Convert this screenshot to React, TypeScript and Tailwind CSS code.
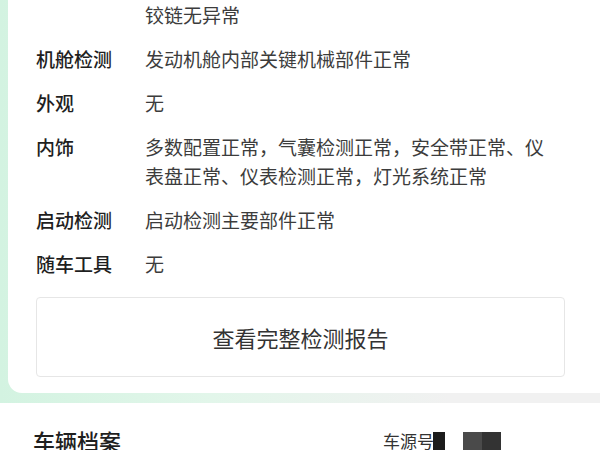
import React from "react";

const rows: { label: string; value: string }[] = [
  { label: "", value: "铰链无异常" },
  { label: "机舱检测", value: "发动机舱内部关键机械部件正常" },
  { label: "外观", value: "无" },
  { label: "内饰", value: "多数配置正常，气囊检测正常，安全带正常、仪表盘正常、仪表检测正常，灯光系统正常" },
  { label: "启动检测", value: "启动检测主要部件正常" },
  { label: "随车工具", value: "无" },
];

export default function App() {
  return (
    <div
      className="w-[600px] h-[450px] overflow-hidden bg-white"
      style={{ fontFamily: '"Noto Sans CJK SC", "Noto Sans", sans-serif' }}
    >
      {/* inspection card */}
      <div className="bg-[linear-gradient(to_right,#d3f3e1_0%,#e2f6ea_35%,#f1f1f1_75%)] pl-[8px] pb-[10px]">
        <div className="bg-white rounded-bl-[14px] pl-[28px] pr-[35px] pb-[16px]">
          <div className="flex flex-col gap-[15px]">
            {rows.map((row, i) => (
              <div key={i} className="flex text-[19px] leading-[29px]">
                <div className="w-[109px] shrink-0 font-medium text-[#1f1f1f]">{row.label}</div>
                <div className="max-w-[410px] text-[#3c3c3c]">{row.value}</div>
              </div>
            ))}
          </div>
          <button
            type="button"
            className="mt-[19px] flex h-[80px] w-full items-center justify-center rounded-[4px] border border-[#e6e6e6] text-[22px] text-[#333]"
          >
            查看完整检测报告
          </button>
        </div>
      </div>

      {/* vehicle file */}
      <div className="flex items-center justify-between pl-[33px] pr-[99px] pt-[23px]">
        <div className="text-[22px] leading-[29px] font-medium text-[#1f1f1f]">车辆档案</div>
        <div className="flex items-center">
          <span className="text-[17px] leading-[29px] text-[#333]">车源号</span>
          <span className="ml-[-1px] h-[18px] w-[12px] bg-[#1c1c1c]" />
          <span className="ml-[18px] flex h-[18px] w-[38px]">
            <span className="h-full w-1/2 bg-[#4a4a4a]" />
            <span className="h-full w-1/2 bg-[#333]" />
          </span>
        </div>
      </div>
    </div>
  );
}
